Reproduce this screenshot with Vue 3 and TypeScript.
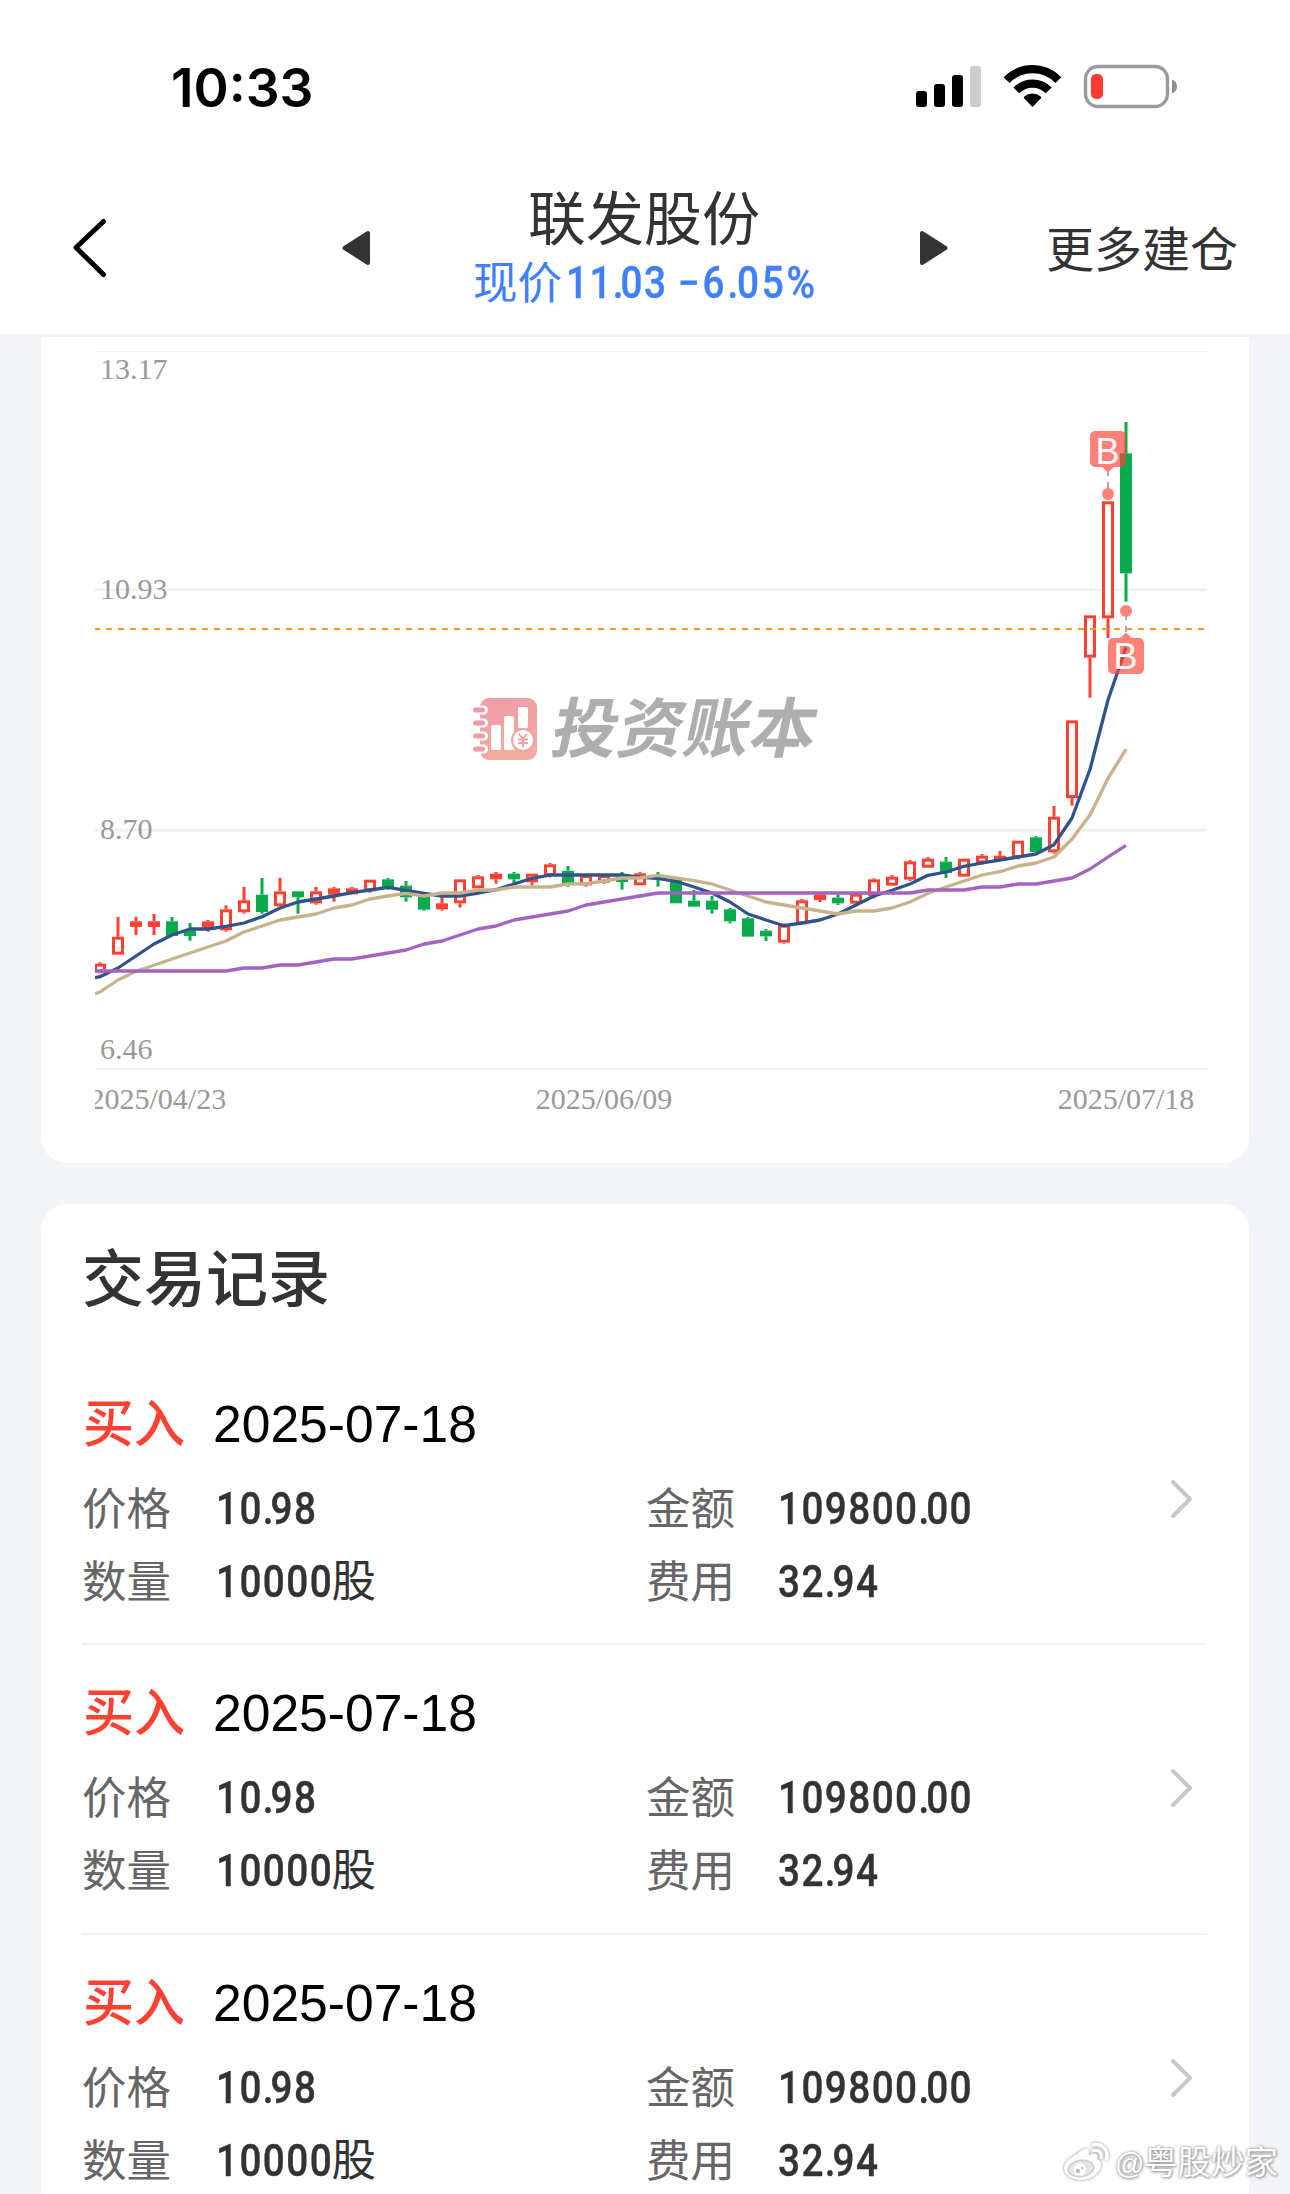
<script setup lang="ts">
type Candle = [kind: 'r' | 'g', high: number, top: number, bottom: number, low: number]

const X0 = 100
const STEP = 18
const cx = (i: number) => X0 + STEP * i

// Each block holds offsets in thirds of a pixel from its own base line.
const scale = (base: number, rows: Candle[]): Candle[] =>
  rows.map(([k, h, t, b, l]) => [k, base + h / 3, base + t / 3, base + b / 3, base + l / 3])

const candles: Candle[] = [
  ...scale(820, [
    ['r', 427, 431, 458, 460], ['r', 291, 350, 404, 404], ['r', 291, 304, 321, 345],
    ['r', 282, 304, 321, 345], ['g', 291, 304, 348, 348], ['g', 309, 331, 348, 362],
    ['r', 300, 304, 324, 335], ['r', 256, 268, 331, 335], ['r', 201, 241, 277, 281],
    ['g', 174, 224, 276, 281], ['r', 174, 214, 259, 259], ['g', 214, 214, 232, 281],
    ['r', 201, 214, 250, 254], ['r', 201, 205, 224, 245], ['r', 201, 205, 223, 223],
    ['r', 179, 179, 214, 218], ['g', 174, 178, 205, 209], ['g', 183, 197, 232, 245],
    ['g', 225, 228, 269, 272], ['r', 228, 250, 268, 272], ['r', 178, 178, 250, 263],
    ['r', 165, 169, 205, 205], ['r', 156, 161, 178, 191], ['g', 156, 161, 178, 190],
    ['r', 161, 161, 187, 195], ['r', 129, 133, 168, 172], ['g', 138, 152, 195, 200],
    ['r', 165, 165, 196, 200], ['r', 165, 165, 188, 191], ['g', 156, 170, 186, 209],
    ['r', 156, 160, 196, 196], ['g', 156, 165, 178, 200], ['g', 178, 178, 250, 250],
    ['g', 210, 242, 260, 260], ['g', 228, 242, 269, 281],
  ]),
  ...scale(780, [
    ['g', 384, 388, 424, 430], ['g', 411, 415, 470, 470], ['g', 447, 452, 469, 483],
    ['r', 430, 434, 488, 491], ['r', 357, 361, 433, 433], ['r', 341, 343, 360, 366],
    ['g', 343, 353, 370, 375], ['r', 341, 341, 371, 371], ['r', 295, 298, 348, 355],
    ['r', 285, 290, 317, 317], ['r', 240, 244, 299, 303], ['r', 231, 236, 263, 263],
    ['g', 231, 245, 279, 294], ['r', 236, 236, 290, 290], ['r', 222, 227, 250, 254],
    ['r', 213, 227, 243, 243], ['r', 182, 182, 234, 238], ['g', 168, 172, 216, 216],
  ]),
  ...scale(640, [['r', 498, 530, 637, 641], ['r', 241, 241, 474, 497]]),
  ...scale(400, [['r', 646, 646, 773, 893], ['r', 304, 304, 655, 714], ['g', 66, 160, 520, 605]]),
]

const series = (parts: [number, number[]][]) =>
  parts.flatMap(([base, vs]) => vs.map((v) => base + v / 3))

const linePath = (start: number, ys: number[]) =>
  `${95},${start} ` + ys.map((y, i) => `${cx(i)},${y.toFixed(1)}`).join(' ')

const maShort = linePath(977.7, series([
  [820, [470, 444, 408, 372, 345, 327, 327, 319, 309, 290, 264, 246, 237, 228, 218, 210, 202, 211,
    220, 228, 228, 219, 209, 192, 175, 165, 165, 165, 165, 165, 172, 175, 184, 201, 219]],
  [780, [366, 402, 420, 437, 429, 420, 402, 375, 348, 331, 312, 286, 276, 259, 249, 240, 231, 222]],
  [640, [614, 534, 388, 180, 22]],
]))
const maMid = linePath(993.7, series([
  [820, [516, 480, 454, 436, 417, 399, 381, 363, 336, 318, 300, 291, 282, 264, 255, 237, 228, 220,
    228, 219, 219, 210, 210, 201, 201, 201, 192, 191, 183, 174, 174, 166, 174, 182, 192]],
  [780, [330, 348, 366, 375, 384, 393, 402, 393, 393, 384, 366, 340, 321, 303, 285, 275, 258, 249]],
  [640, [651, 597, 525, 415, 328]],
]))
const maLong = linePath(971, series([
  [820, [453, 453, 453, 453, 453, 453, 453, 453, 444, 444, 435, 435, 426, 417, 417, 408, 399, 390,
    372, 363, 345, 327, 318, 300, 291, 282, 273, 255, 246, 237, 228, 219, 219, 219, 219]],
  [780, [339, 339, 339, 339, 339, 339, 339, 339, 339, 339, 339, 330, 330, 330, 321, 321, 312, 312]],
  [640, [723, 714, 687, 651, 616]],
]))

interface Trade {
  side: string
  date: string
  price: string
  amount: string
  quantity: string
  fee: string
}
const trades: Trade[] = Array.from({ length: 3 }, () => ({
  side: '买入',
  date: '2025-07-18',
  price: '10.98',
  amount: '109800.00',
  quantity: '10000',
  fee: '32.94',
}))

const split = (s: string) => s.split(/(\.)/)
</script>

<template>
  <div class="page">
    <header class="top">
      <div class="status">
        <span class="clock">10:33</span>
        <svg class="status-icons" width="264" height="50" viewBox="914 60 264 50">
          <rect x="916" y="91" width="11" height="16" rx="3" />
          <rect x="934" y="84" width="11" height="23" rx="3" />
          <rect x="952" y="75" width="11" height="32" rx="3" />
          <rect x="970" y="66" width="11" height="41" rx="3" fill="#ccc" />
          <g fill="none" stroke="#000" stroke-width="8.2">
            <path d="M1006.6 80.2a36 36 0 0 1 51.8 0" />
            <path d="M1016.3 90.4a22.6 22.6 0 0 1 32.4 0" />
          </g>
          <path d="M1032.500 107l-8.400-8.800q-.8-1 .2-1.800a13.500 13.500 0 0 1 16.400 0q1 .8.2 1.800z" />
          <rect x="1085.500" y="66.500" width="82" height="40" rx="12.500" fill="none" stroke="#9a9a9a" stroke-width="3.400" />
          <rect x="1091" y="74" width="12" height="25" rx="5" fill="#ff3b30" />
          <path d="M1172 79.500q5 2 5 7t-5 7z" fill="#8e8e8e" />
        </svg>
      </div>
      <nav class="nav">
        <svg class="back" width="40" height="64" viewBox="70 216 40 64">
          <path d="M103.500 221.500L76 247.500L103.500 274.500" fill="none" stroke="#000" stroke-width="5" stroke-linecap="round" stroke-linejoin="round" />
        </svg>
        <svg class="arrow prev" width="28" height="36" viewBox="0 0 28 36">
          <path d="M26 3v30L2.500 18z" fill="#333" stroke="#333" stroke-width="4" stroke-linejoin="round" />
        </svg>
        <div class="stock">
          <div class="name">联发股份</div>
          <div class="quote">
            <span class="now">现价</span>
            <span class="q1"><span class="num"><span v-for="(p, i) in split('11.03')" :key="i" :class="{ dot: p === '.' }">{{ p }}</span></span></span>
            <span class="num q2"><span v-for="(p, i) in split('−6.05%')" :key="i" :class="{ dot: p === '.' }">{{ p }}</span></span>
          </div>
        </div>
        <svg class="arrow next" width="28" height="36" viewBox="0 0 28 36">
          <path d="M2 3v30L25.500 18z" fill="#333" stroke="#333" stroke-width="4" stroke-linejoin="round" />
        </svg>
        <span class="more">更多建仓</span>
      </nav>
    </header>

    <main class="content">
      <section class="card chart">
        <svg width="1208" height="825" viewBox="41 337 1208 825">
          <defs>
            <clipPath id="plot"><rect x="95" y="337" width="1112" height="800" /></clipPath>
            <linearGradient id="book" x1="0" y1="0" x2=".3" y2="1">
              <stop offset="0" stop-color="#f09aab" />
              <stop offset="1" stop-color="#f3ac9f" />
            </linearGradient>
          </defs>

          <g fill="#f2f2f2">
            <rect x="95" y="351" width="1112" height="1" />
            <rect x="95" y="588.300" width="1112" height="3" />
            <rect x="95" y="828.700" width="1112" height="3" />
            <rect x="95" y="1068" width="1112" height="2" />
          </g>

          <g class="brand">
            <rect x="480" y="698" width="57" height="62" rx="9" fill="url(#book)" />
            <g v-for="n in 4" :key="n">
              <rect x="471" :y="692.500 + n * 13" width="17" height="9" rx="4.500" fill="#fff" />
              <rect x="473" :y="694.500 + n * 13" width="12" height="5" rx="2.500" fill="#f09aa8" />
            </g>
            <g fill="#fff">
              <rect x="491" y="725" width="10" height="25" rx="1.500" />
              <rect x="504" y="716" width="10" height="34" rx="1.500" />
              <rect x="518" y="707" width="10" height="21" rx="1.500" />
            </g>
            <circle cx="523" cy="740" r="12" fill="#f2a5a2" />
            <circle cx="523" cy="740" r="10" fill="#fff" />
            <path d="M519 734l4 5 4-5M518 739.500h10M518 743h10M523 739v8" fill="none" stroke="#f2a5a2" stroke-width="2" />
            <text class="brand-text" transform="translate(548.500 752) skewX(-12)" textLength="264" lengthAdjust="spacingAndGlyphs">投资账本</text>
          </g>

          <g class="axis">
            <text x="100" y="379">13.17</text>
            <text x="100" y="598.700">10.93</text>
            <text x="100" y="838.700">8.70</text>
            <text x="100" y="1059">6.46</text>
            <g clip-path="url(#plot)">
              <text x="89.500" y="1108.700">2025/04/23</text>
            </g>
            <text x="604" y="1108.700" text-anchor="middle">2025/06/09</text>
            <text x="1126" y="1108.700" text-anchor="middle">2025/07/18</text>
          </g>

          <g clip-path="url(#plot)">
            <g v-for="(c, i) in candles" :key="i" :fill="c[0] === 'r' ? '#ff4133' : '#0aab4c'">
              <rect :x="cx(i) - 1.500" :y="c[1]" width="3" :height="Math.max(0, c[2] - c[1])" />
              <rect :x="cx(i) - 1.500" :y="c[3]" width="3" :height="Math.max(0, c[4] - c[3])" />
              <rect
                v-if="c[0] === 'g' || c[3] - c[2] < 7"
                :x="cx(i) - 6" :y="c[2]" width="12" :height="c[3] - c[2]"
              />
              <rect
                v-else
                :x="cx(i) - 4.500" :y="c[2] + 1.500" width="9" :height="c[3] - c[2] - 3"
                fill="#fff" stroke="#ff4133" stroke-width="3"
              />
            </g>
            <path d="M94 629H1206" stroke="#ff9a14" stroke-width="2" stroke-dasharray="6 6" />
            <g fill="none" stroke-width="3.300" stroke-linejoin="round">
              <polyline :points="maShort" stroke="#2f548b" />
              <polyline :points="maMid" stroke="#c8b28c" />
              <polyline :points="maLong" stroke="#a463c0" />
            </g>
          </g>

          <g stroke="#aaa" stroke-width="2">
            <path d="M1108 472v4M1108 482v6" />
            <path d="M1126 617v3M1126 626v6" />
          </g>
          <g fill="#ff4133" fill-opacity=".67">
            <path d="M1095 431h26a5 5 0 0 1 5 5v26a5 5 0 0 1-5 5h-7l-6 5.500-6-5.500h-7a5 5 0 0 1-5-5v-26a5 5 0 0 1 5-5z" />
            <circle cx="1108" cy="494" r="6" />
            <path d="M1113 638h7l6-5.500 6 5.500h7a5 5 0 0 1 5 5v26a5 5 0 0 1-5 5h-26a5 5 0 0 1-5-5v-26a5 5 0 0 1 5-5z" />
            <circle cx="1126" cy="611" r="6" />
          </g>
          <g class="mark" text-anchor="middle">
            <text x="1107.500" y="464">B</text>
            <text x="1125.500" y="669">B</text>
          </g>
        </svg>
      </section>

      <section class="card records">
        <h2>交易记录</h2>
        <article v-for="(t, i) in trades" :key="i" class="trade">
          <div class="trade-head">
            <span class="side">{{ t.side }}</span>
            <span class="date">{{ t.date }}</span>
          </div>
          <div class="trade-body">
            <dl class="col">
              <div><dt>价格</dt><dd><span class="num"><span v-for="(p, k) in split(t.price)" :key="k" :class="{ dot: p === '.' }">{{ p }}</span></span></dd></div>
              <div><dt>数量</dt><dd><span class="num">{{ t.quantity }}</span><span class="unit">股</span></dd></div>
            </dl>
            <dl class="col second">
              <div><dt>金额</dt><dd><span class="num"><span v-for="(p, k) in split(t.amount)" :key="k" :class="{ dot: p === '.' }">{{ p }}</span></span></dd></div>
              <div><dt>费用</dt><dd><span class="num"><span v-for="(p, k) in split(t.fee)" :key="k" :class="{ dot: p === '.' }">{{ p }}</span></span></dd></div>
            </dl>
            <svg class="chevron" width="26" height="44" viewBox="0 0 26 44">
              <path d="M4 5L21 22L4 39" fill="none" stroke="#c8c8c8" stroke-width="4" stroke-linecap="round" stroke-linejoin="round" />
            </svg>
          </div>
        </article>
      </section>
    </main>

    <div class="credit">
      <svg width="48" height="42" viewBox="0 0 48 42">
        <path d="M14 12c5-5 11-8 12-3 .4 2-.5 4-.5 4s4-2.200 7.500-1c3 1 1.500 5 1.500 5s4.500 1.500 3.500 7c-1.200 8-11 14-20 14C8 38 1 33 1 26c0-5 5-10 13-14z" fill="#fff" />
        <ellipse cx="18" cy="26.500" rx="13.500" ry="8.800" fill="#c9c9c9" transform="rotate(-8 18 26.500)" />
        <ellipse cx="18" cy="26.500" rx="12" ry="7.500" fill="#e4e4e4" transform="rotate(-8 18 26.500)" />
        <circle cx="17" cy="27.500" r="6.300" fill="#fff" />
        <circle cx="15" cy="29" r="2.300" fill="#bbb" />
        <circle cx="19" cy="26" r="1.100" fill="#bbb" />
        <path d="M30 2.500c9-1.500 16 6 13.500 14M31 8.500c5-.8 8 2.500 7 7" fill="none" stroke="#fff" stroke-width="3.400" stroke-linecap="round" />
      </svg>
      <span class="at">@</span><span>粤股炒家</span>
    </div>
  </div>
</template>

<style>
body {
  margin: 0;
  background: #f3f4f7;
}
</style>

<style scoped>
.page {
  position: relative;
  width: 1290px;
  height: 2194px;
  overflow: hidden;
  background: #f3f4f7;
  color: #333;
  font-family: 'Liberation Sans', 'Noto Sans CJK SC', sans-serif;
}
.top {
  box-sizing: border-box;
  height: 337px;
  background: #fff;
  border-bottom: 3px solid #f1f1f2;
}
.status {
  height: 174px;
  display: flex;
  justify-content: space-between;
  padding: 0 112px 0 171px;
}
.clock {
  font: 600 53.300px/64px Inter, sans-serif;
  color: #000;
  margin-top: 56px;
}
.status-icons {
  margin-top: 60px;
}
.nav {
  height: 160px;
  display: flex;
  align-items: flex-start;
}
.back {
  margin: 42px 0 0 70px;
}
.arrow {
  margin-top: 56px;
}
.prev {
  margin-left: 232px;
}
.stock {
  width: 380px;
  margin-left: 84px;
  display: flex;
  flex-direction: column;
  align-items: center;
}
.next {
  margin-left: 86px;
}
.name {
  margin-top: 6px;
  font: 400 58px/70px 'Noto Sans CJK SC', sans-serif;
}
.quote {
  width: 342px;
  display: flex;
  margin-top: 3px;
  color: #4080ff;
  font: 400 44.500px/60px 'Noto Sans CJK SC', sans-serif;
  white-space: nowrap;
}
.now {
  flex: none;
  width: 93px;
  height: 60px;
  margin-top: -3px;
}
.q1 {
  flex: none;
  display: flex;
  width: 112px;
}
.more {
  margin: 40px 0 0 98px;
  font: 400 48px/64px 'Noto Sans CJK SC', sans-serif;
  white-space: nowrap;
}
.num {
  display: inline-block;
  font-family: Roboto, sans-serif;
  font-weight: 500;
  font-size: 44px;
  letter-spacing: 1.600px;
  white-space: nowrap;
  transform: scaleX(0.88);
  transform-origin: 0 50%;
  -webkit-text-stroke: 0.400px currentColor;
}
.dot {
  letter-spacing: -3.500px;
}
.quote .num {
  line-height: 60px;
}
.quote .q2 {
  letter-spacing: 3.200px;
}
.quote .q2 .dot {
  letter-spacing: -1.500px;
}
.content {
  display: flex;
  flex-direction: column;
  padding: 0 41px;
}
.card {
  background: #fff;
  border-radius: 26px;
}
.chart {
  height: 825.500px;
  border-radius: 0 0 26px 26px;
}
.chart svg {
  display: block;
}
.axis {
  font: 30px 'Liberation Serif', serif;
  fill: #999;
}
.mark {
  font: 36px 'Liberation Sans', sans-serif;
  fill: #fff;
}
.brand-text {
  font: 700 65px 'Noto Sans CJK SC', sans-serif;
  fill: #aeaeae;
}
.records {
  margin-top: 41.500px;
  height: 1100px;
  padding: 0 42px 0 41px;
}
h2 {
  margin: 0;
  height: 151.500px;
  font: 500 62px/142px 'Noto Sans CJK SC', sans-serif;
}
.trade {
  box-sizing: border-box;
  height: 289.500px;
  border-bottom: 2px solid #f1f1f2;
  padding-top: 36px;
}
.trade-head {
  display: flex;
  align-items: flex-start;
  height: 64px;
}
.side {
  width: 130px;
  padding-left: 1px;
  color: #ff4133;
  font: 500 51px/57px 'Noto Sans CJK SC', sans-serif;
}
.date {
  margin-top: 2px;
  color: #000;
  font: 51.600px/60px 'Liberation Sans', sans-serif;
}
.trade-body {
  display: flex;
}
.col {
  margin: 12px 0 0;
  width: 564px;
}
.col.second {
  width: 523px;
}
.col > div {
  display: flex;
  height: 73px;
  line-height: 73px;
}
dt {
  width: 134px;
  color: #666;
  font: 400 44.500px/75px 'Noto Sans CJK SC', sans-serif;
}
.second dt {
  width: 132px;
}
dd {
  margin: 0;
  font: 400 44.500px/73px 'Noto Sans CJK SC', sans-serif;
  white-space: nowrap;
}
.unit {
  margin-left: -17.500px;
}
.chevron {
  margin-top: 21px;
}
.credit {
  position: absolute;
  left: 1062px;
  top: 2139px;
  display: flex;
  color: #fff;
  font: 400 33.500px/48px 'Liberation Sans', 'Noto Sans CJK SC', sans-serif;
  white-space: nowrap;
  text-shadow: 0 0 3px #888, 1px 1px 3px #999;
}
.at {
  width: 29px;
  margin-left: -1px;
  font-size: 29px;
  line-height: 50px;
}
.credit svg {
  margin: 3px 5px 0 1px;
  filter: drop-shadow(0 0 1.500px #888);
}
</style>
